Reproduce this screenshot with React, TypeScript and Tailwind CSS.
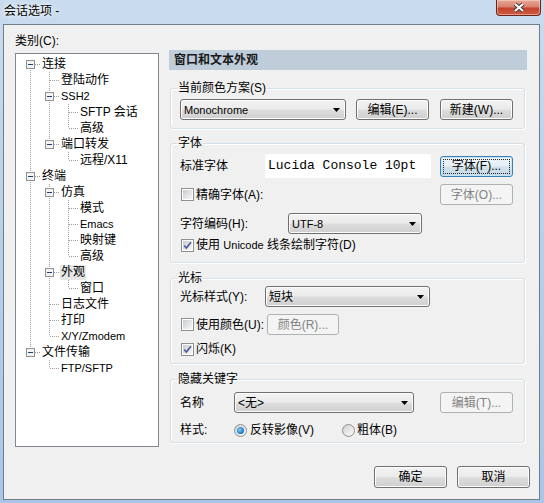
import type { ReactNode } from 'react';

// 树节点
type TreeNode = { label: string; level: number; open?: boolean; latin?: boolean; selected?: boolean };

const tree: TreeNode[] = [
  { label: '连接', level: 0, open: true },
  { label: '登陆动作', level: 1 },
  { label: 'SSH2', level: 1, open: true, latin: true },
  { label: 'SFTP 会话', level: 2 },
  { label: '高级', level: 2 },
  { label: '端口转发', level: 1, open: true },
  { label: '远程/X11', level: 2 },
  { label: '终端', level: 0, open: true },
  { label: '仿真', level: 1, open: true },
  { label: '模式', level: 2 },
  { label: 'Emacs', level: 2, latin: true },
  { label: '映射键', level: 2 },
  { label: '高级', level: 2 },
  { label: '外观', level: 1, open: true, selected: true },
  { label: '窗口', level: 2 },
  { label: '日志文件', level: 1 },
  { label: '打印', level: 1 },
  { label: 'X/Y/Zmodem', level: 1, latin: true },
  { label: '文件传输', level: 0, open: true },
  { label: 'FTP/SFTP', level: 1, latin: true },
];

function hasLaterSibling(i: number) {
  const lv = tree[i].level;
  for (let j = i + 1; j < tree.length; j++) {
    if (tree[j].level < lv) return false;
    if (tree[j].level === lv) return true;
  }
  return false;
}

function ancestorAt(i: number, lv: number) {
  for (let j = i - 1; j >= 0; j--) if (tree[j].level === lv) return j;
  return -1;
}

const btnFace =
  'border border-[#707070] rounded-[3px] bg-[linear-gradient(to_bottom,#f2f2f2_0%,#ebebeb_48%,#dddddd_52%,#cfcfcf_100%)] shadow-[inset_0_0_0_1px_#fcfcfc]';
const btnDisabled = 'border border-[#adb2b5] rounded-[3px] bg-[#f4f4f4] text-[#838383]';

function Btn({ children, className, disabled, focused }: { children: ReactNode; className: string; disabled?: boolean; focused?: boolean }) {
  if (focused) {
    return (
      <div className={`${className} h-[21px] flex p-[2px] border border-[#3c7fb1] rounded-[3px] bg-[linear-gradient(to_bottom,#eef6fb_0%,#e4eef5_48%,#d3e2ec_52%,#c6d9e6_100%)] shadow-[inset_0_0_0_1px_#c4e5f6]`}>
        <div className="flex-1 flex items-center justify-center border border-dotted border-[#222] leading-[14px]">{children}</div>
      </div>
    );
  }
  return (
    <div className={`${className} flex items-center justify-center leading-[14px] ${disabled ? btnDisabled : btnFace}`}>{children}</div>
  );
}

function Combo({ value, className, latin }: { value: string; className: string; latin?: boolean }) {
  return (
    <div className={`${className} h-[21px] flex items-center pl-[3px] pr-[5px] ${btnFace}`}>
      <span className={`flex-1 leading-[14px] ${latin ? 'text-[11px]' : ''}`}>{value}</span>
      <svg width="7" height="4" viewBox="0 0 7 4" className="shrink-0">
        <path d="M0 0h7L3.5 4z" fill="#000" />
      </svg>
    </div>
  );
}

function Check({ checked }: { checked?: boolean }) {
  return (
    <span className="w-[13px] h-[13px] shrink-0 flex border border-[#8e8f8f] bg-white p-[1px]">
      <span className="flex-1 flex items-center justify-center bg-[linear-gradient(135deg,#c6cbd1_0%,#e3e4e6_55%,#f7f7f7_100%)]">
        {checked && (
          <svg width="9" height="9" viewBox="0 0 9 9">
            <path d="M1.2 4.6L3.4 7L7.9 1.3" fill="none" stroke="#4a5f97" strokeWidth="1.7" />
          </svg>
        )}
      </span>
    </span>
  );
}

function Radio({ on }: { on?: boolean }) {
  return (
    <span className="w-[13px] h-[13px] shrink-0 rounded-full border border-[#8e8f8f] bg-[linear-gradient(135deg,#cfd1d4,#fbfbfb)] flex items-center justify-center">
      {on && <span className="w-[7px] h-[7px] rounded-full bg-[radial-gradient(circle_at_40%_40%,#8fd0f7_0%,#2a83c8_55%,#0d4a82_100%)]" />}
    </span>
  );
}

function Group({ title, className, children }: { title: string; className: string; children: ReactNode }) {
  return (
    <fieldset className={`${className} w-[355px] ml-[1px] border border-[#d5dfe5] rounded-[3px] shadow-[inset_1px_1px_0_#fff,1px_1px_0_#fff] px-0`}>
      <legend className="ml-[6px] px-[1px] leading-[14px]">{title}</legend>
      {children}
    </fieldset>
  );
}

function TreeRow({ node, i }: { node: TreeNode; i: number }) {
  const cells = [];
  for (let l = 0; l <= node.level; l++) {
    if (l < node.level) {
      const cont = hasLaterSibling(ancestorAt(i, l));
      cells.push(
        <svg key={l} width="19" height="16" className="shrink-0">
          {cont && <line x1="9.5" y1="0" x2="9.5" y2="16" stroke="#a0a0a0" strokeDasharray="1 1" />}
        </svg>
      );
    } else {
      const top = i === 0 ? 8 : 0;
      const bottom = hasLaterSibling(i) ? 16 : 8;
      cells.push(
        <svg key={l} width="19" height="16" className="shrink-0">
          <line x1="9.5" y1={top} x2="9.5" y2={bottom} stroke="#a0a0a0" strokeDasharray="1 1" />
          <line x1="10" y1="8.5" x2="19" y2="8.5" stroke="#a0a0a0" strokeDasharray="1 1" />
          {node.open && (
            <>
              <rect x="5.5" y="4.5" width="8" height="8" fill="#f2f2f2" stroke="#919191" />
              <line x1="7" y1="8.5" x2="12" y2="8.5" stroke="#1c3e7e" />
            </>
          )}
        </svg>
      );
    }
  }
  return (
    <div className="h-[16px] flex items-center">
      {cells}
      <span className={`ml-[1px] leading-[15px] px-[1px] -mx-[1px] ${node.latin ? 'text-[11px]' : ''} ${node.selected ? 'bg-[#e6e6e6]' : ''}`}>
        {node.label}
      </span>
    </div>
  );
}

export default function App() {
  return (
    <div className="w-[544px] h-[503px] flex flex-col overflow-hidden bg-[linear-gradient(180deg,#c9dcef_0%,#bdd3ea_30%,#b2cbe7_70%,#aac5e5_100%)] text-[12px] text-black [font-family:'Liberation_Sans','Noto_Sans_CJK_SC',sans-serif]">
      {/* 标题栏 */}
      <div className="h-[24px] shrink-0 flex items-start">
        <div className="ml-[4px] mt-[4px] leading-[15px] [text-shadow:0_0_6px_#fff,0_0_3px_#fff]">会话选项 -</div>
        <div className="ml-auto mr-[3px] w-[45px] h-[16px] flex items-center justify-center rounded-b-[4px] border border-t-0 border-[#6b2418] bg-[linear-gradient(to_bottom,#e8a898_0%,#d88270_45%,#c4432d_55%,#cf5a42_100%)] shadow-[inset_0_0_0_1px_rgba(255,220,210,0.5)]">
          <svg width="14" height="11" viewBox="0 0 14 11">
            <path d="M3 2L11 9M11 2L3 9" stroke="#3d3d3d" strokeWidth="4" />
            <path d="M3 2L11 9M11 2L3 9" stroke="#fff" strokeWidth="2" />
          </svg>
        </div>
      </div>

      {/* 客户区 */}
      <div className="ml-[3px] mr-[4px] mb-[3px] flex-1 flex flex-col border border-[#6f7d8c] bg-[#f0f0f0]">
        <div className="flex items-start">
          {/* 类别 */}
          <div className="ml-[11px] w-[144px] flex flex-col">
            <div className="mt-[8px] h-[16px] leading-[16px]">类别(C):</div>
            <div className="mt-[4px] h-[394px] border border-[#828790] bg-white pt-[2px] pl-[5px]">
              {tree.map((n, i) => (
                <TreeRow key={i} node={n} i={i} />
              ))}
            </div>
          </div>

          {/* 右侧设置 */}
          <div className="ml-[10px] w-[358px] flex flex-col">
            <div className="mt-[25px] h-[20px] flex items-center pl-[5px] bg-[#bfcddb] font-bold text-[#1a1a1a]">窗口和文本外观</div>

            <Group title="当前颜色方案(S)" className="mt-[11px]">
              <div className="pt-[4px] pb-[8px] pl-[9px] pr-[11px] flex items-center">
                <Combo value="Monochrome" className="w-[166px]" latin />
                <Btn className="ml-[10px] w-[73px] h-[21px]">编辑(E)...</Btn>
                <Btn className="ml-[11px] w-[73px] h-[21px]">新建(W)...</Btn>
              </div>
            </Group>

            <Group title="字体" className="mt-[7px]">
              <div className="pt-[4px] pb-[9px] pl-[9px] pr-[11px] flex flex-col">
                <div className="h-[24px] flex items-center">
                  <span className="w-[85px] leading-[14px]">标准字体</span>
                  <div className="w-[166px] h-[24px] bg-white flex items-center pl-[3px] text-[13px] [font-family:'Liberation_Mono',monospace]">
                    Lucida Console 10pt
                  </div>
                  <Btn focused className="ml-auto w-[73px]">字体(F)...</Btn>
                </div>
                <div className="mt-[6px] h-[21px] flex items-center">
                  <span className="ml-[1px]"><Check /></span>
                  <span className="ml-[2px] leading-[14px]">精确字体(A):</span>
                  <Btn disabled className="ml-auto w-[73px] h-[21px]">字体(O)...</Btn>
                </div>
                <div className="mt-[8px] h-[21px] flex items-center">
                  <span className="w-[108px] leading-[14px]">字符编码(H):</span>
                  <Combo value="UTF-8" className="w-[134px]" latin />
                </div>
                <div className="mt-[3px] h-[16px] flex items-center">
                  <span className="ml-[1px]"><Check checked /></span>
                  <span className="ml-[2px] leading-[14px]">使用 <span className="text-[11px]">Unicode</span> 线条绘制字符(D)</span>
                </div>
              </div>
            </Group>

            <Group title="光标" className="mt-[8px]">
              <div className="pt-[1px] pb-[6px] pl-[9px] pr-[11px] flex flex-col">
                <div className="h-[21px] flex items-center">
                  <span className="w-[85px] leading-[14px]">光标样式(Y):</span>
                  <Combo value="短块" className="w-[165px]" />
                </div>
                <div className="mt-[7px] h-[21px] flex items-center">
                  <span className="ml-[1px]"><Check /></span>
                  <span className="ml-[2px] w-[71px] leading-[14px]">使用颜色(U):</span>
                  <Btn disabled className="w-[72px] h-[21px]">颜色(R)...</Btn>
                </div>
                <div className="mt-[6px] h-[16px] flex items-center">
                  <span className="ml-[1px]"><Check checked /></span>
                  <span className="ml-[2px] leading-[14px]">闪烁(K)</span>
                </div>
              </div>
            </Group>

            <Group title="隐藏关键字" className="mt-[8px]">
              <div className="pt-[6px] pb-[4px] pl-[9px] pr-[11px] flex flex-col">
                <div className="h-[21px] flex items-center">
                  <span className="w-[54px] leading-[14px]">名称</span>
                  <Combo value="<无>" className="w-[180px]" />
                  <Btn disabled className="ml-auto w-[73px] h-[21px]">编辑(T)...</Btn>
                </div>
                <div className="mt-[9px] h-[16px] flex items-center">
                  <span className="w-[54px] leading-[14px]">样式:</span>
                  <Radio on />
                  <span className="ml-[3px] w-[92px] leading-[14px]">反转影像(V)</span>
                  <Radio />
                  <span className="ml-[2px] leading-[14px]">粗体(B)</span>
                </div>
              </div>
            </Group>
          </div>
        </div>

        {/* 底部按钮 */}
        <div className="mt-[19px] pr-[9px] flex justify-end gap-[10px]">
          <Btn className="w-[73px] h-[22px]">确定</Btn>
          <Btn className="w-[73px] h-[22px]">取消</Btn>
        </div>
      </div>
    </div>
  );
}
